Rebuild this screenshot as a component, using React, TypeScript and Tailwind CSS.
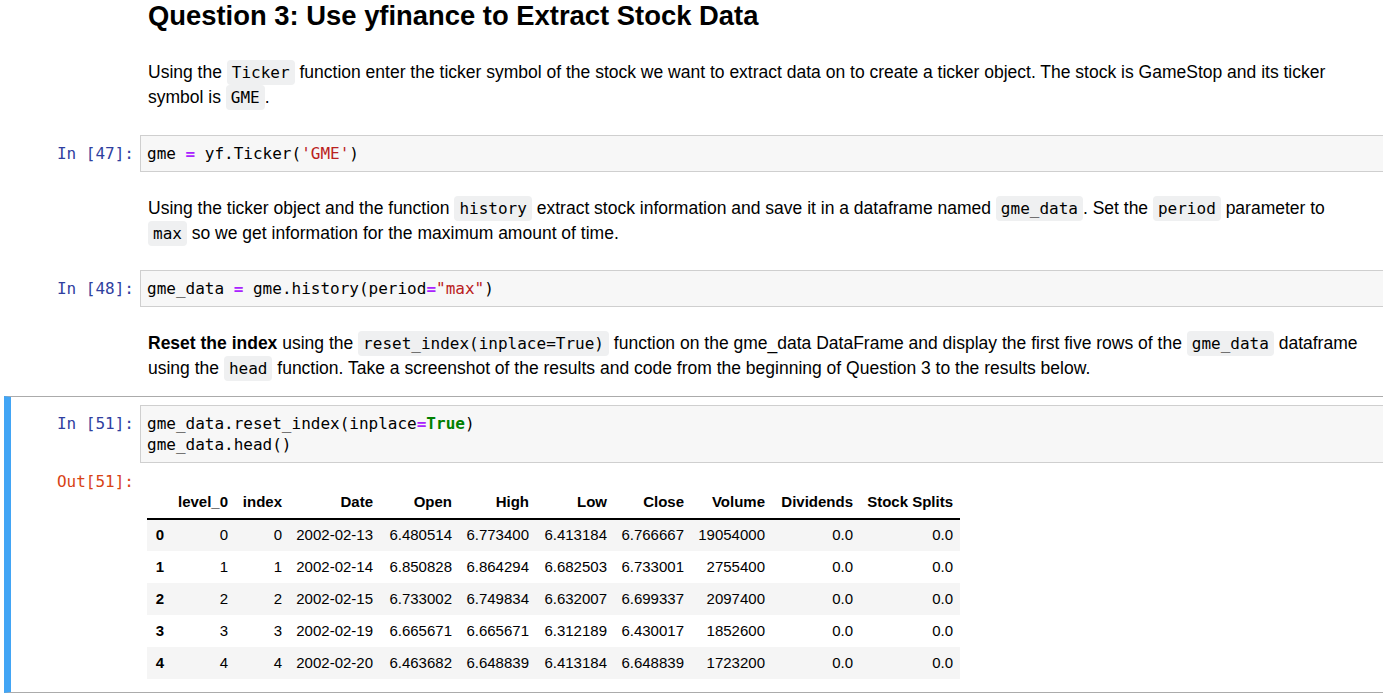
import React from 'react';

const mono = "font-['DejaVu_Sans_Mono',monospace]";
const sans = "font-['Liberation_Sans',Arial,sans-serif]";

const Code = ({ children }: { children: React.ReactNode }) => (
  <code className={`${mono} text-[16px] leading-none bg-[#eff0f1] px-[5px] py-[3px] rounded-sm`}>{children}</code>
);

const Op = ({ children }: { children: React.ReactNode }) => (
  <span className="text-[#aa22ff] font-bold">{children}</span>
);

const Str = ({ children }: { children: React.ReactNode }) => (
  <span className="text-[#ba2121]">{children}</span>
);

const CodeCell = ({ n, promptWidth = 'w-[140px]', children }: { n: number; promptWidth?: string; children: React.ReactNode }) => (
  <div className="flex">
    <div className={`${promptWidth} shrink-0 pr-[6px] pt-[8px] text-right text-[16px] leading-[21px] text-[#303f9f] ${mono}`}>
      In&nbsp;[{n}]:
    </div>
    <div className={`flex-1 border border-[#cfcfcf] bg-[#f7f7f7] px-[6px] py-[7px] text-[16px] leading-[21px] text-black whitespace-pre ${mono}`}>
      {children}
    </div>
  </div>
);

const columns = [
  { label: '', w: 'w-[24px]' },
  { label: 'level_0', w: 'w-[64px]' },
  { label: 'index', w: 'w-[54px]' },
  { label: 'Date', w: 'w-[91px]' },
  { label: 'Open', w: 'w-[79px]' },
  { label: 'High', w: 'w-[77px]' },
  { label: 'Low', w: 'w-[78px]' },
  { label: 'Close', w: 'w-[77px]' },
  { label: 'Volume', w: 'w-[81px]' },
  { label: 'Dividends', w: 'w-[88px]' },
  { label: 'Stock Splits', w: 'w-[100px]' },
];

const rows = [
  ['0', '0', '2002-02-13', '6.480514', '6.773400', '6.413184', '6.766667', '19054000', '0.0', '0.0'],
  ['1', '1', '2002-02-14', '6.850828', '6.864294', '6.682503', '6.733001', '2755400', '0.0', '0.0'],
  ['2', '2', '2002-02-15', '6.733002', '6.749834', '6.632007', '6.699337', '2097400', '0.0', '0.0'],
  ['3', '3', '2002-02-19', '6.665671', '6.665671', '6.312189', '6.430017', '1852600', '0.0', '0.0'],
  ['4', '4', '2002-02-20', '6.463682', '6.648839', '6.413184', '6.648839', '1723200', '0.0', '0.0'],
];

const App = () => {
  return (
    <div className="w-full h-[695px] overflow-hidden bg-white">
      <div className={`w-[1400px] text-black ${sans}`}>
        {/* heading */}
        <div className="pl-[148px]">
          <h2 className="text-[27.4px] leading-[31px] font-bold">Question 3: Use yfinance to Extract Stock Data</h2>
        </div>

        <div className="pl-[148px] mt-[29px] text-[17.5px] leading-[25px] whitespace-nowrap">
          Using the <Code>Ticker</Code> function enter the ticker symbol of the stock we want to extract data on to create a ticker object. The stock is GameStop and its ticker
          <br />
          symbol is <Code>GME</Code>.
        </div>

        <div className="mt-[25px]">
          <CodeCell n={47}>
            gme <Op>=</Op> yf.Ticker(<Str>'GME'</Str>)
          </CodeCell>
        </div>

        <div className="pl-[148px] mt-[24px] text-[17.5px] leading-[25px] whitespace-nowrap">
          Using the ticker object and the function <Code>history</Code> extract stock information and save it in a dataframe named <Code>gme_data</Code>. Set the <Code>period</Code> parameter to
          <br />
          <Code>max</Code> so we get information for the maximum amount of time.
        </div>

        <div className="mt-[24px]">
          <CodeCell n={48}>
            gme_data <Op>=</Op> gme.history(period<Op>=</Op><Str>"max"</Str>)
          </CodeCell>
        </div>

        <div className="pl-[148px] mt-[24px] text-[17.5px] leading-[25px] whitespace-nowrap">
          <b>Reset the index</b> using the <Code>reset_index(inplace=True)</Code> function on the gme_data DataFrame and display the first five rows of the <Code>gme_data</Code> dataframe
          <br />
          using the <Code>head</Code> function. Take a screenshot of the results and code from the beginning of Question 3 to the results below.
        </div>

        {/* selected cell */}
        <div className="mt-[15px] ml-[4px] border-t border-b border-[#ababab] border-l-[7px] border-l-[#42a5f5] pt-[8px] pb-[13px]">
          <CodeCell n={51} promptWidth="w-[129px]">
            gme_data.reset_index(inplace<Op>=</Op><span className="text-[#008000] font-bold">True</span>)
            {'\n'}gme_data.head()
          </CodeCell>

          <div className="flex mt-[8px]">
            <div className={`w-[129px] shrink-0 pr-[6px] text-right text-[16px] leading-[21px] text-[#d84315] ${mono}`}>
              Out[51]:
            </div>
            <div className="flex-1">
              <table className={`mt-[16px] ml-[7px] table-fixed w-[813px] border-collapse text-[15px] text-black ${sans}`}>
                <thead>
                  <tr className="h-[32px] border-b-2 border-black">
                    {columns.map((c, i) => (
                      <th key={i} className={`${c.w} px-[7px] text-right font-bold whitespace-nowrap`}>
                        {c.label}
                      </th>
                    ))}
                  </tr>
                </thead>
                <tbody>
                  {rows.map((r, i) => (
                    <tr key={i} className={`h-[32px] ${i % 2 === 0 ? 'bg-[#f5f5f5]' : 'bg-white'}`}>
                      <th className="px-[7px] text-right font-bold">{i}</th>
                      {r.map((v, j) => (
                        <td key={j} className="px-[7px] text-right whitespace-nowrap">
                          {v}
                        </td>
                      ))}
                    </tr>
                  ))}
                </tbody>
              </table>
            </div>
          </div>
        </div>
      </div>
    </div>
  );
};

export default App;
